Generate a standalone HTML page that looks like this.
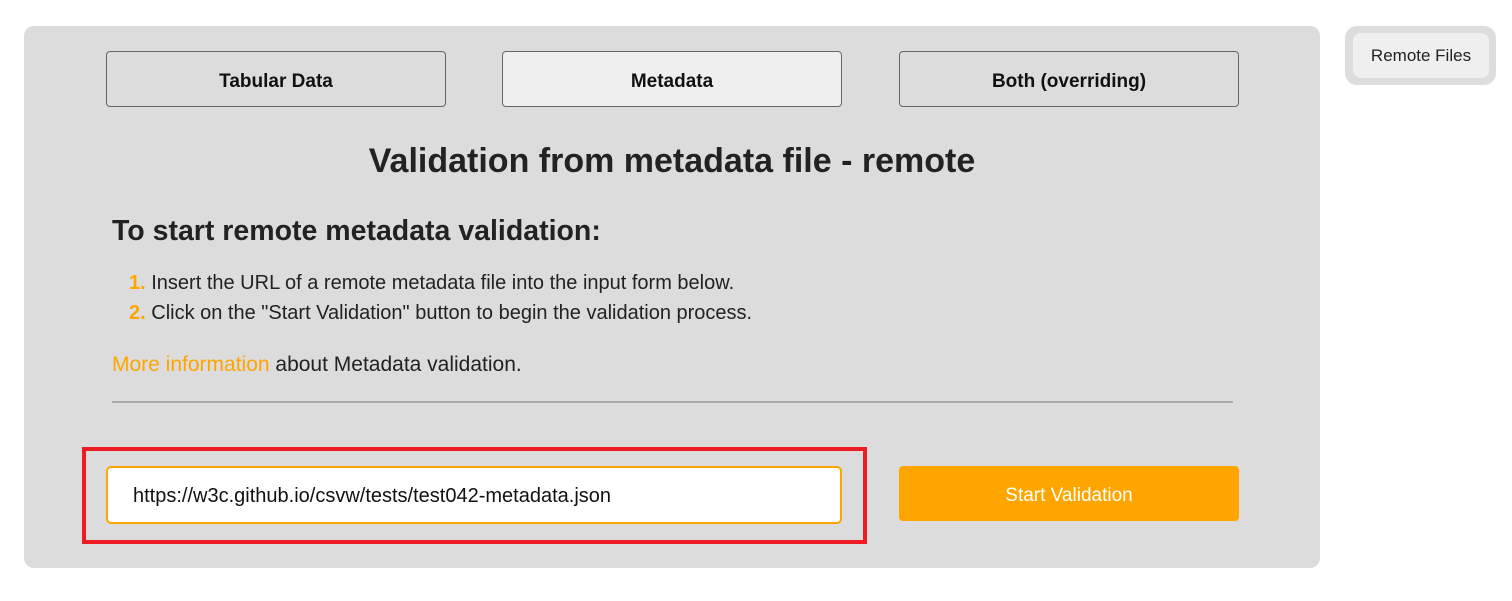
<!DOCTYPE html>
<html><head><style>
*{margin:0;padding:0;box-sizing:border-box}
body{width:1512px;height:601px;background:#fff;font-family:"Liberation Sans",sans-serif;color:#222;position:relative;overflow:hidden}
.a{position:absolute}
.panel{left:24px;top:26px;width:1296px;height:542px;background:#dcdcdc;border-radius:10px}
.tab{top:51px;width:340px;height:56px;border:1px solid #666;border-radius:4px;display:flex;align-items:center;justify-content:center;font-weight:bold;font-size:19px;color:#111;background:#dcdcdc;padding-top:6px}
.o{color:#ffa500}
</style></head><body>
<div class="a panel"></div>
<div class="a tab" style="left:106px">Tabular Data</div>
<div class="a tab" style="left:502px;background:#efefef">Metadata</div>
<div class="a tab" style="left:899px">Both (overriding)</div>
<div class="a" style="left:24px;width:1296px;top:142px;text-align:center;font-size:34px;font-weight:bold;color:#222">Validation from metadata file - remote</div>
<div class="a" style="left:112px;top:215px;font-size:28.5px;font-weight:bold;color:#222">To start remote metadata validation:</div>
<div class="a" style="left:129px;top:268px;font-size:20px;line-height:30px;color:#222">
<div><b class="o">1.</b> Insert the URL of a remote metadata file into the input form below.</div>
<div><b class="o">2.</b> Click on the "Start Validation" button to begin the validation process.</div>
</div>
<div class="a" style="left:112px;top:353px;font-size:21px;color:#222"><span class="o">More information</span> about Metadata validation.</div>
<div class="a" style="left:112px;top:401px;width:1121px;height:2px;background:#aaa"></div>
<div class="a" style="left:82px;top:447px;width:785px;height:97px;border:4px solid #ed1c24"></div>
<div class="a" style="left:106px;top:466px;width:736px;height:58px;border:2px solid #ffa500;border-radius:5px;background:#fff;font-size:20px;padding-left:25px;line-height:56px;color:#111">https://w3c.github.io/csvw/tests/test042-metadata.json</div>
<div class="a" style="left:899px;top:466px;width:340px;height:55px;background:#ffa500;border-radius:4px;color:#fff;font-size:19px;display:flex;align-items:center;justify-content:center;padding-top:4px">Start Validation</div>
<div class="a" style="left:1345px;top:26px;width:151px;height:59px;background:#ddd;border-radius:12px"></div>
<div class="a" style="left:1353px;top:33px;width:136px;height:45px;background:#efefef;border-radius:8px;font-size:17px;display:flex;align-items:center;justify-content:center;color:#222">Remote Files</div>
</body></html>
